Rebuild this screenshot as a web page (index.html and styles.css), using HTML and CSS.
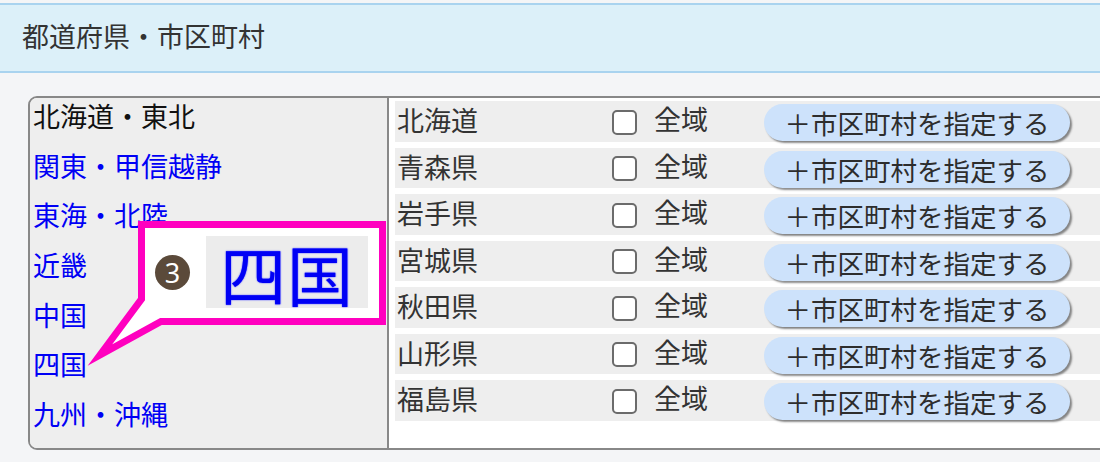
FILE: index.html
```html
<!DOCTYPE html>
<html lang="ja">
<head>
<meta charset="utf-8">
<title>都道府県・市区町村</title>
<link rel="stylesheet" href="styles.css">
</head>
<body>
<div class="page">
  <header class="hdr">都道府県・市区町村</header>
  <div class="panel">
    <ul class="regions">
      <li class="region current">北海道・東北</li>
      <li class="region"><a href="#">関東・甲信越静</a></li>
      <li class="region"><a href="#">東海・北陸</a></li>
      <li class="region"><a href="#">近畿</a></li>
      <li class="region"><a href="#">中国</a></li>
      <li class="region"><a href="#">四国</a></li>
      <li class="region"><a href="#">九州・沖縄</a></li>
    </ul>
    <div class="prefs">
      <div class="pref"><span class="pname">北海道</span><span class="chk"></span><span class="all">全域</span><span class="btn">＋市区町村を指定する</span></div>
      <div class="pref"><span class="pname">青森県</span><span class="chk"></span><span class="all">全域</span><span class="btn">＋市区町村を指定する</span></div>
      <div class="pref"><span class="pname">岩手県</span><span class="chk"></span><span class="all">全域</span><span class="btn">＋市区町村を指定する</span></div>
      <div class="pref"><span class="pname">宮城県</span><span class="chk"></span><span class="all">全域</span><span class="btn">＋市区町村を指定する</span></div>
      <div class="pref"><span class="pname">秋田県</span><span class="chk"></span><span class="all">全域</span><span class="btn">＋市区町村を指定する</span></div>
      <div class="pref"><span class="pname">山形県</span><span class="chk"></span><span class="all">全域</span><span class="btn">＋市区町村を指定する</span></div>
      <div class="pref"><span class="pname">福島県</span><span class="chk"></span><span class="all">全域</span><span class="btn">＋市区町村を指定する</span></div>
    </div>
  </div>

  <svg class="callout-shape" width="1100" height="462" viewBox="0 0 1100 462">
    <path d="M141.5 224.5 H382.5 V321.5 H161 L100 355 L141.5 299 Z" fill="#fff" stroke="#ff00bf" stroke-width="7" stroke-linejoin="miter" stroke-miterlimit="10"/>
  </svg>
  <div class="callout">
    <span class="num">3</span>
    <span class="zoombox">四国</span>
  </div>
</div>
</body>
</html>
```

FILE: styles.css
```css
* { box-sizing: border-box; }
html, body { margin: 0; padding: 0; }
body {
  width: 1100px;
  height: 462px;
  overflow: hidden;
  background: #f4f5f7;
  font-family: "Noto Sans CJK JP", "Noto Sans", sans-serif;
}
.page {
  position: relative;
  width: 1100px;
  height: 462px;
  padding-top: 3px;
}
.hdr {
  height: 70px;
  border-top: 2px solid #a9d3ef;
  border-bottom: 2px solid #a9d3ef;
  background: #dcf0f9;
  color: #333;
  font-size: 27px;
  line-height: 62px;
  padding-left: 22px;
}
.panel {
  margin-top: 23px;
  margin-left: 28px;
  width: 1100px;
  height: 354px;
  display: flex;
  border: 2px solid #888;
  border-radius: 9px 0 0 9px;
  background: #fff;
  overflow: hidden;
}
.regions {
  list-style: none;
  margin: 0;
  padding: 0 0 0 3px;
  width: 359px;
  flex: none;
  background: #eee;
  border-right: 2px solid #888;
}
.region {
  font-size: 27px;
  line-height: 36px;
  height: 36px;
  margin-bottom: 13.7px;
  color: #111;
  white-space: nowrap;
}
.region a {
  color: #0000f5;
  text-decoration: none;
}
.prefs {
  flex: 1;
  padding: 3px 0 0 6px;
}
.pref {
  display: flex;
  align-items: center;
  height: 40.5px;
  margin-bottom: 6px;
  background: #eee;
  padding-left: 2px;
  color: #333;
  font-size: 27px;
  white-space: nowrap;
}
.pname {
  width: 215px;
  flex: none;
  line-height: 36px;
  position: relative;
  top: -1px;
}
.chk {
  flex: none;
  width: 25px;
  height: 25px;
  border: 2px solid #6b6b6b;
  border-radius: 5px;
  background: #fff;
  margin-top: 2px;
}
.all {
  flex: none;
  width: 127px;
  padding-left: 17px;
  line-height: 36px;
  position: relative;
  top: -2px;
}
.btn {
  flex: none;
  width: 306px;
  height: 37px;
  margin-top: 3px;
  border-radius: 19px;
  background: #cde2fb;
  box-shadow: 2px 2px 2px rgba(0, 0, 0, 0.45);
  font-size: 26.5px;
  line-height: 37px;
  text-align: center;
  color: #2d2d2d;
}
.callout-shape {
  position: absolute;
  left: 0;
  top: 0;
  pointer-events: none;
}
.callout {
  position: absolute;
  left: 155px;
  top: 236px;
  display: flex;
  align-items: center;
  gap: 16px;
}
.num {
  width: 35px;
  height: 35px;
  border-radius: 50%;
  background: #5b4a3a;
  color: #fff;
  font-family: "Noto Sans", sans-serif;
  font-size: 27px;
  line-height: 35px;
  text-align: center;
}
.zoombox {
  width: 162px;
  height: 72px;
  background: #ececec;
  color: #0000f5;
  font-size: 66px;
  font-weight: 400;
  line-height: 72px;
  text-align: center;
  letter-spacing: 1px;
  text-shadow: 0 0 1px #3030ff, 0 0 2px #8080ff;
}
```
